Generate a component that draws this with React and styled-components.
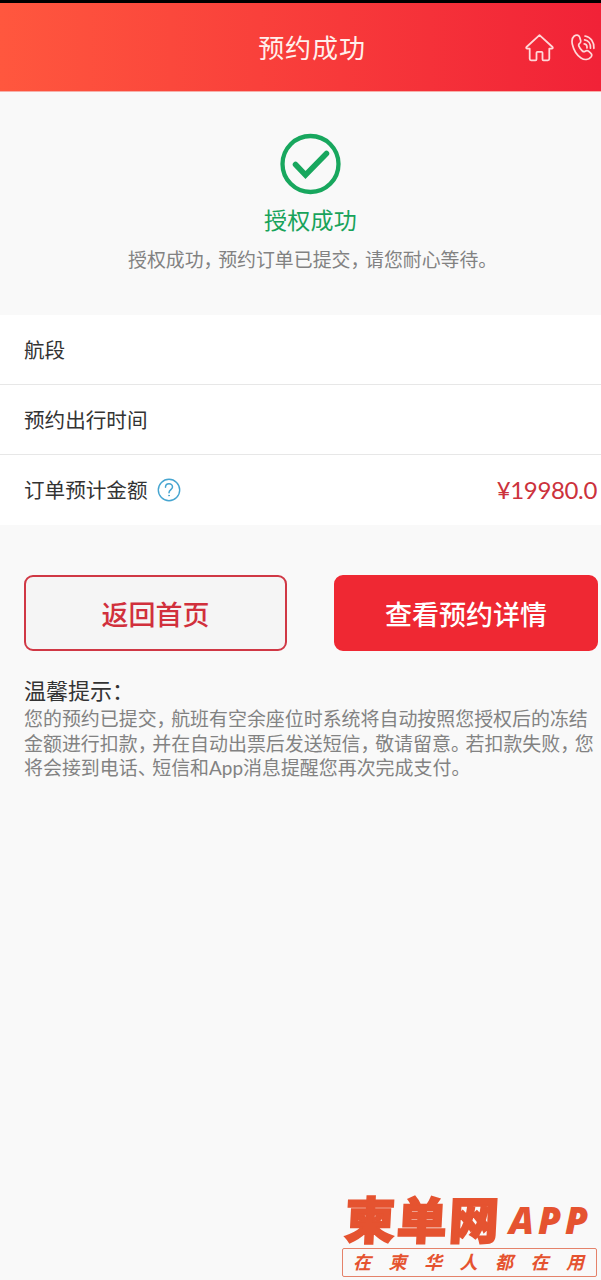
import React from 'react';
import styled, { createGlobalStyle } from 'styled-components';

const GlobalStyle = createGlobalStyle`
  * {
    box-sizing: border-box;
  }

  body {
    margin: 0;
    background: rgb(249, 249, 249);
    font-family: Lato, "Noto Sans CJK SC", sans-serif;
  }
`;

const Page = styled.div`
  display: flex;
  flex-direction: column;
  width: 601px;
  height: 1280px;
  overflow: hidden;
`;

const Header = styled.header`
  display: grid;
  grid-template-columns: 1fr 110px 1fr;
  align-items: center;
  height: 92px;
  padding-left: 23px;
  border-top: 3px solid rgb(0, 0, 0);
  border-bottom: 1px solid rgb(246, 176, 170);
  background: linear-gradient(to right, rgb(255, 87, 62), rgb(241, 34, 55)) padding-box;
`;

const Title = styled.h1`
  grid-column: 2;
  margin: 0;
  padding-top: 2px;
  color: rgb(255, 240, 236);
  font-size: 26px;
  font-weight: 400;
  line-height: 40px;
  letter-spacing: 0.9px;
  text-align: center;
  white-space: nowrap;
`;

const HeaderIcons = styled.div`
  display: flex;
  justify-content: flex-end;
  gap: 17px;
  padding: 1px 5px 0 0;
`;

const Result = styled.section`
  display: flex;
  flex-direction: column;
  align-items: center;
  height: 223px;
  padding: 41px 0 0 20px;
`;

const ResultTitle = styled.h2`
  margin: 7px 0 0;
  color: rgb(24, 163, 91);
  font-size: 23px;
  font-weight: 400;
  line-height: 36px;
  letter-spacing: 0.3px;
`;

const ResultText = styled.p`
  margin: 8px 0 0;
  color: rgb(130, 130, 130);
  font-size: 18.9px;
  line-height: 28px;
  white-space: nowrap;
`;

const Mark = styled.span`
  display: inline-block;
  width: 14.6px;
  font-feature-settings: "halt";
`;

const Rows = styled.section`
  background: rgb(255, 255, 255);
`;

const Row = styled.div`
  display: flex;
  align-items: center;
  height: 70px;
  padding: 0 4px 0 24px;
  border-bottom: 1px solid rgb(231, 231, 231);

  &:last-child {
    border-bottom: 0;
  }
`;

const Label = styled.span`
  margin-right: 9px;
  color: rgb(51, 51, 51);
  font-size: 20.6px;
  line-height: 30px;
`;

const Price = styled.span`
  margin-left: auto;
  color: rgb(204, 50, 60);
  font-size: 24px;
  line-height: 30px;
  letter-spacing: -0.35px;
`;

const Buttons = styled.div`
  display: grid;
  grid-template-columns: 263px 264px;
  gap: 47px;
  padding: 50px 3px 0 24px;
`;

const Button = styled.button`
  height: 76px;
  padding: 3px 0 0;
  border: 2px solid ${({ $primary }) => ($primary ? 'rgb(239, 40, 51)' : 'rgb(208, 56, 69)')};
  border-radius: 9px;
  background: ${({ $primary }) => ($primary ? 'rgb(239, 40, 51)' : 'rgb(245, 245, 245)')};
  color: ${({ $primary }) => ($primary ? 'rgb(255, 255, 255)' : 'rgb(209, 48, 60)')};
  font-family: inherit;
  font-size: 27px;
  font-weight: 500;
  line-height: 40px;
`;

const Tips = styled.section`
  padding: 24px 0 0 24px;
`;

const TipsTitle = styled.h3`
  margin: 0 0 1px;
  color: rgb(51, 51, 51);
  font-size: 22px;
  font-weight: 400;
  line-height: 31px;
`;

const TipsLine = styled.p`
  margin: 0;
  color: rgb(130, 130, 130);
  font-size: 18.95px;
  line-height: 24.7px;
  white-space: nowrap;
`;

const Brand = styled.footer`
  display: flex;
  flex-direction: column;
  width: 255px;
  margin: auto 4px 3px auto;
  color: rgb(229, 83, 48);
`;

const BrandName = styled.div`
  display: flex;
  align-items: flex-end;
  height: 54px;
  padding-left: 3px;
`;

const BrandText = styled.span`
  padding-bottom: 1px;
  font-size: 50px;
  font-weight: 900;
  line-height: 54px;
  letter-spacing: 2px;
  -webkit-text-stroke: 1.8px rgb(229, 83, 48);
  transform: skewX(-3deg);
`;

const BrandSuffix = styled.span`
  margin-left: 8px;
  padding-bottom: 4px;
  font-family: "Open Sans", sans-serif;
  font-size: 37px;
  font-style: italic;
  font-weight: 800;
  line-height: 48px;
  letter-spacing: 4px;
`;

const Slogan = styled.div`
  display: flex;
  justify-content: space-between;
  align-items: center;
  height: 29px;
  padding: 0 12px 0 10px;
  border: 1px solid rgb(229, 130, 106);
  border-radius: 2px;
  font-size: 18px;
  font-style: italic;
  font-weight: 700;
  line-height: 27px;
`;

const MARKS = /([，。、])/;

// punctuation is set narrower than a full em
function Text({ children }) {
  return children
    .split(MARKS)
    .map((part, i) => (MARKS.test(part) ? <Mark key={i}>{part}</Mark> : part));
}

function HomeIcon() {
  return (
    <svg width="29" height="28" viewBox="0 0 29 28" fill="none" stroke="rgb(255, 216, 216)" strokeWidth="1.8" strokeLinejoin="round" strokeLinecap="round">
      <path d="M14.5 1.2 1.5 13c-.6.9-.2 1.7.8 1.7h2.4v10.1q0 1.5 1.5 1.5h4.3q1 0 1-1v-6.6q0-.9.9-.9h4.2q.9 0 .9.9v6.6q0 1 1 1h4.3q1.5 0 1.5-1.5V14.7h2.4c1 0 1.4-.8.8-1.7Z" />
    </svg>
  );
}

function PhoneIcon() {
  return (
    <svg width="25" height="28" viewBox="0 0 25 28" fill="none" stroke="rgb(255, 216, 216)" strokeWidth="1.7" strokeLinejoin="round" strokeLinecap="round">
      <path d="M3.2 2C5.200.6 7.700.8 8.600 3l1 3.200c.4 1.500 0 2.400-1 3.200-1 .8-1.200 1.500-.7 2.700.8 2 1.900 3.500 3.500 4.900 1 .9 1.800.9 2.800.2 1.200-.8 2.200-.9 3.300 0l2.200 1.900c1.300 1.200 1.400 2.500.3 3.900-2.400 2.900-6.500 3.300-10 1C5.900 21.200 2.700 16.100 1.400 10.500.7 7.300.8 3.900 3.200 2Z" />
      <path d="M13.200 9.900c1.900.3 3 1.900 2.800 4.100M13.600 5.900c3.800.5 6.200 3.800 5.900 8.300M14 2c5.500.8 9.200 5.900 8.900 12.300" />
    </svg>
  );
}

function SuccessIcon() {
  return (
    <svg width="62" height="62" viewBox="0 0 62 62" fill="none" stroke="rgb(24, 167, 94)">
      <circle cx="30.5" cy="31" r="28" strokeWidth="4.3" />
      <path d="m15.5 31.5 10 10.500 21-21.500" strokeWidth="5.5" strokeLinecap="round" />
    </svg>
  );
}

function HelpIcon() {
  return (
    <svg width="24" height="24" viewBox="0 0 24 24" fill="none" stroke="rgb(70, 165, 208)" strokeLinecap="round">
      <circle cx="12" cy="12" r="10.7" strokeWidth="1.4" />
      <path d="M8.5 9.200c0-4.700 7-4.600 7-.3 0 2.600-3.500 2.800-3.500 5.900" strokeWidth="1.5" />
      <circle cx="12" cy="17.6" r=".5" strokeWidth="1" />
    </svg>
  );
}

function App() {
  return (
    <Page>
      <GlobalStyle />
      <Header>
        <Title>预约成功</Title>
        <HeaderIcons>
          <HomeIcon />
          <PhoneIcon />
        </HeaderIcons>
      </Header>
      <Result>
        <SuccessIcon />
        <ResultTitle>授权成功</ResultTitle>
        <ResultText>
          <Text>授权成功，预约订单已提交，请您耐心等待。</Text>
        </ResultText>
      </Result>
      <Rows>
        <Row>
          <Label>航段</Label>
        </Row>
        <Row>
          <Label>预约出行时间</Label>
        </Row>
        <Row>
          <Label>订单预计金额</Label>
          <HelpIcon />
          <Price>¥19980.0</Price>
        </Row>
      </Rows>
      <Buttons>
        <Button>返回首页</Button>
        <Button $primary>查看预约详情</Button>
      </Buttons>
      <Tips>
        <TipsTitle>温馨提示：</TipsTitle>
        <TipsLine>
          <Text>您的预约已提交，航班有空余座位时系统将自动按照您授权后的冻结</Text>
        </TipsLine>
        <TipsLine>
          <Text>金额进行扣款，并在自动出票后发送短信，敬请留意。若扣款失败，您</Text>
        </TipsLine>
        <TipsLine>
          <Text>将会接到电话、短信和App消息提醒您再次完成支付。</Text>
        </TipsLine>
      </Tips>
      <Brand>
        <BrandName>
          <BrandText>柬单网</BrandText>
          <BrandSuffix>APP</BrandSuffix>
        </BrandName>
        <Slogan>
          {[...'在柬华人都在用'].map((char, i) => (
            <span key={i}>{char}</span>
          ))}
        </Slogan>
      </Brand>
    </Page>
  );
}

export default App;
